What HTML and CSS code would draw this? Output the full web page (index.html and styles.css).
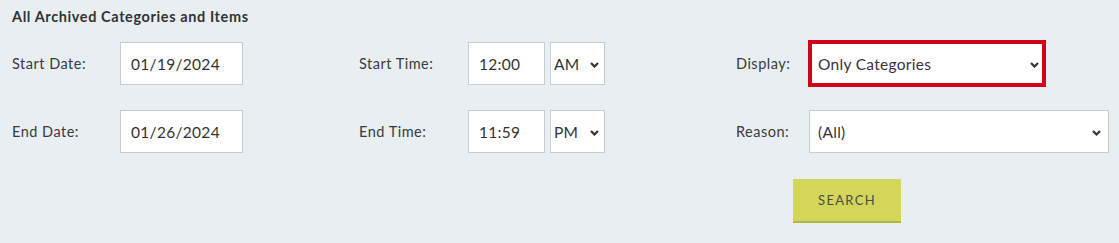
FILE: index.html
```html
<!DOCTYPE html>
<html>
<head>
<meta charset="utf-8">
<link rel="stylesheet" href="styles.css">
</head>
<body>
<div class="panel">
  <h2 class="title">All Archived Categories and Items</h2>
  <div class="grid">
    <label class="lbl">Start Date:</label>
    <div class="cell"><input class="txt date" value="01/19/2024"></div>
    <label class="lbl">Start Time:</label>
    <div class="cell time">
      <input class="txt hour" value="12:00">
      <span class="sel-wrap ampm"><select class="sel"><option>AM</option></select><svg class="chev" width="9" height="6" viewBox="0 0 9 6"><path d="M1 1l3.5 3.5L8 1" fill="none" stroke="#333" stroke-width="2.2"/></svg></span>
    </div>
    <label class="lbl">Display:</label>
    <div class="cell">
      <span class="sel-wrap display"><select class="sel focus"><option>Only Categories</option></select><svg class="chev" width="9" height="6" viewBox="0 0 9 6"><path d="M1 1l3.5 3.5L8 1" fill="none" stroke="#333" stroke-width="2.2"/></svg></span>
    </div>

    <label class="lbl">End Date:</label>
    <div class="cell"><input class="txt date" value="01/26/2024"></div>
    <label class="lbl">End Time:</label>
    <div class="cell time">
      <input class="txt hour" value="11:59">
      <span class="sel-wrap ampm"><select class="sel"><option>PM</option></select><svg class="chev" width="9" height="6" viewBox="0 0 9 6"><path d="M1 1l3.5 3.5L8 1" fill="none" stroke="#333" stroke-width="2.2"/></svg></span>
    </div>
    <label class="lbl">Reason:</label>
    <div class="cell">
      <span class="sel-wrap reason"><select class="sel"><option>(All)</option></select><svg class="chev" width="9" height="6" viewBox="0 0 9 6"><path d="M1 1l3.5 3.5L8 1" fill="none" stroke="#333" stroke-width="2.2"/></svg></span>
    </div>

    <div class="actions"><button class="btn">SEARCH</button></div>
  </div>
</div>
</body>
</html>
```
FILE: styles.css
```css
html, body {
  margin: 0;
  padding: 0;
  background: #e9eef3;
}
body {
  font-family: Lato, "Noto Sans", sans-serif;
  color: #333;
  width: 1119px;
  height: 243px;
  overflow: hidden;
}
.panel {
  padding: 8px 0 0 12px;
}
.title {
  margin: 0;
  font-size: 14.5px;
  font-weight: 700;
  line-height: 18px;
  color: #333;
  letter-spacing: 0.6px;
}
.grid {
  margin-top: 16px;
  display: grid;
  grid-template-columns: 108px 239px 109px 268px 73px 300px;
  grid-auto-rows: 43px;
  row-gap: 25px;
  align-items: center;
}
.lbl {
  font-size: 14.5px;
  color: #3a3a3a;
  letter-spacing: 0.5px;
}
.cell {
  display: flex;
  align-items: center;
  height: 43px;
}
.time {
  gap: 5px;
}
.txt {
  box-sizing: border-box;
  height: 43px;
  border: 1px solid #c6ccd5;
  background: #fff;
  font-family: inherit;
  font-size: 15.5px;
  color: #333;
  padding: 0 0 0 10px;
  margin: 0;
  outline: none;
  letter-spacing: 0.3px;
}
.date {
  width: 123px;
}
.hour {
  width: 77px;
}
.sel-wrap {
  position: relative;
  display: inline-flex;
}
.sel {
  appearance: none;
  -webkit-appearance: none;
  box-sizing: border-box;
  height: 43px;
  border: 1px solid #c6ccd5;
  border-radius: 0;
  background: #fff;
  font-family: inherit;
  font-size: 15.5px;
  color: #333;
  margin: 0;
  letter-spacing: 0.3px;
}
.ampm .sel {
  width: 55px;
  padding-left: 3px;
}
.display {
  margin-left: 2px;
}
.display .sel {
  width: 232px;
  height: 41px;
  border-color: #d0021b;
  outline: 3px solid #d0021b;
  padding-left: 6px;
  color: #3a3040;
}
.reason .sel {
  width: 300px;
  padding-left: 8px;
  color: #3a3040;
}
.chev {
  position: absolute;
  top: 50%;
  margin-top: -2px;
  right: 6px;
  pointer-events: none;
}
.display .chev {
  right: 4px;
}
.reason .chev {
  right: 8px;
}
.actions {
  grid-column: 5 / 7;
  padding-left: 57px;
  margin-top: 1px;
  height: 43px;
}
.btn {
  box-sizing: border-box;
  width: 108px;
  height: 44px;
  background: #d4d659;
  border: none;
  border-bottom: 2px solid #b3b640;
  font-family: inherit;
  font-size: 13px;
  letter-spacing: 1.3px;
  color: #4b4b4b;
  padding: 0;
  margin: 0;
}
```
